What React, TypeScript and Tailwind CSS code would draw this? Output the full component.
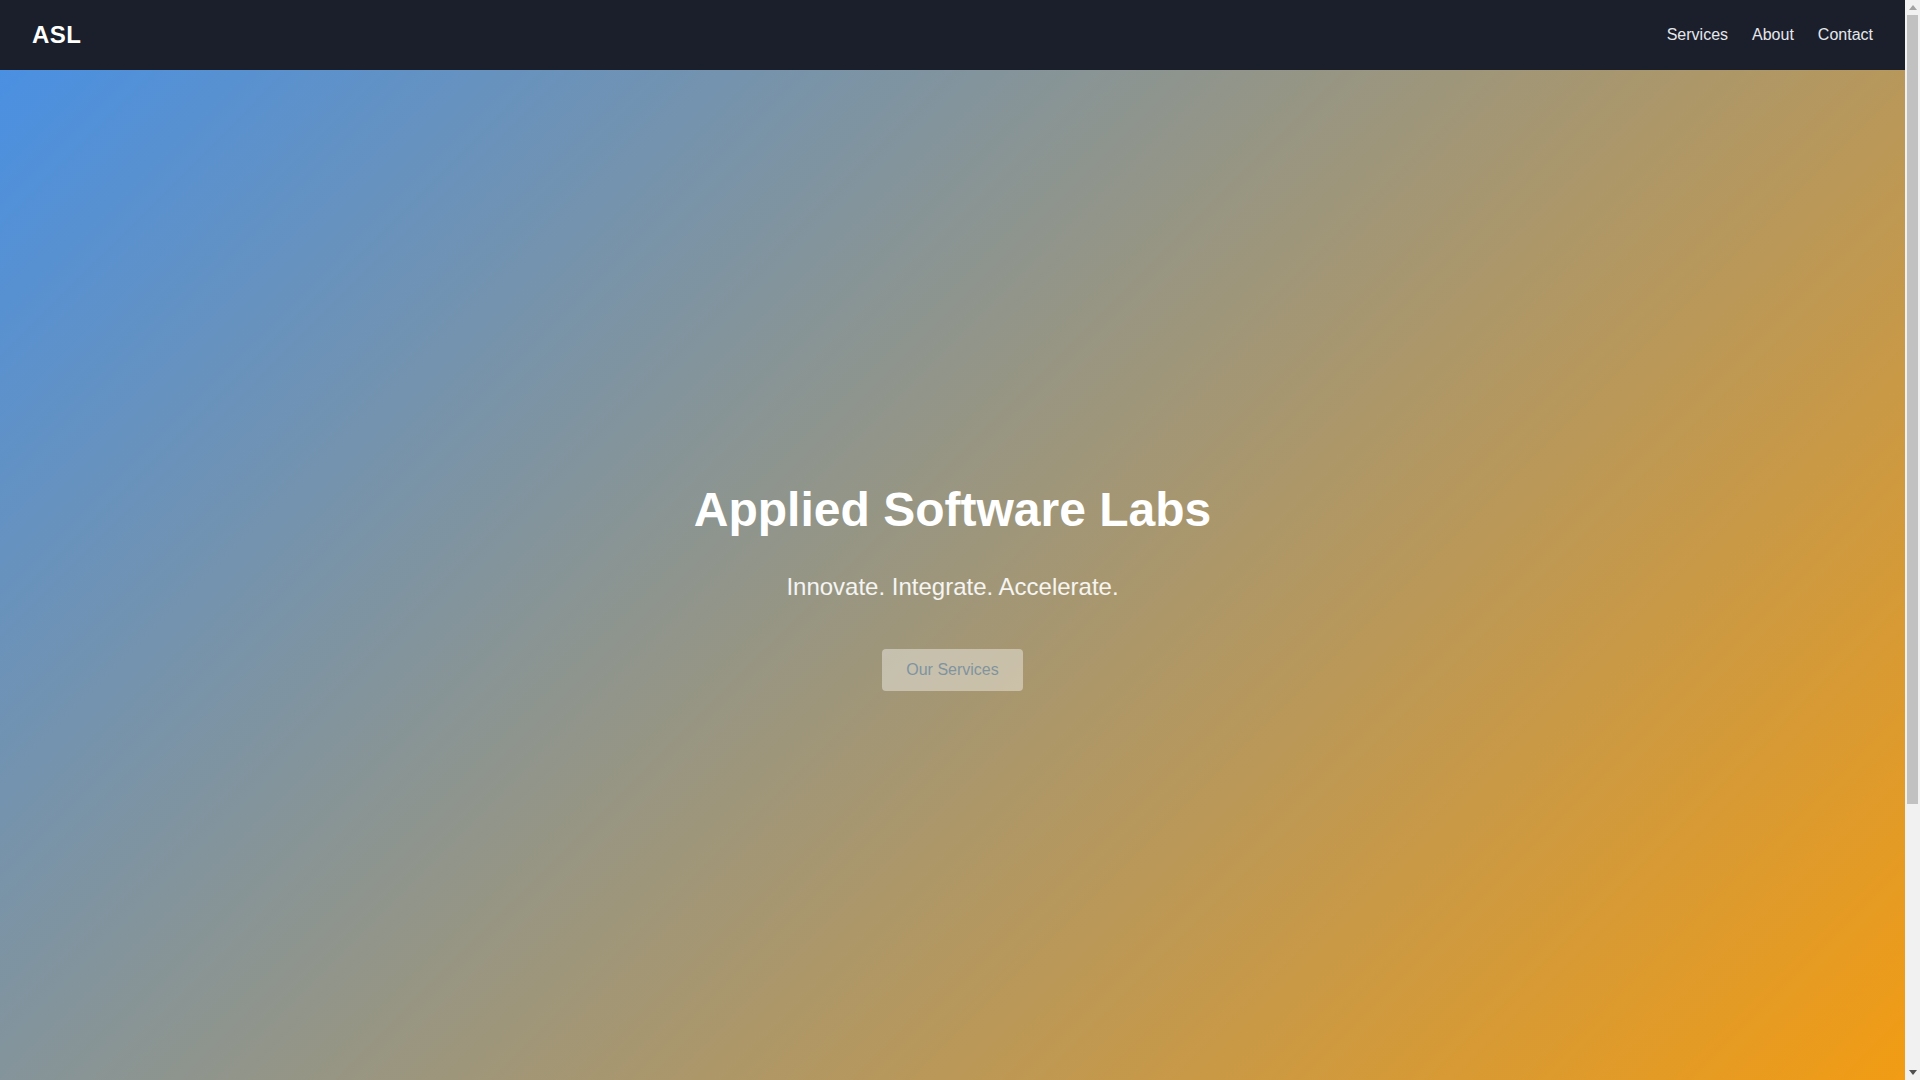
import React from "react";

function Scrollbar() {
  return (
    <div className="w-[15px] h-screen shrink-0 bg-[#f1f1f1] flex flex-col">
      <div className="h-[15px] flex items-center justify-center">
        <svg width="8" height="5" viewBox="0 0 8 5"><polygon points="4,0 8,5 0,5" fill="#a3a3a3" /></svg>
      </div>
      <div className="px-[2px] h-[789px]">
        <div className="h-full bg-[#c1c1c1]" />
      </div>
      <div className="flex-1" />
      <div className="h-[15px] flex items-center justify-center">
        <svg width="8" height="5" viewBox="0 0 8 5"><polygon points="0,0 8,0 4,5" fill="#505050" /></svg>
      </div>
    </div>
  );
}

export default function App() {
  return (
    <div className="h-screen flex overflow-hidden font-['Liberation_Sans',Arial,sans-serif]">
      <div className="flex-1 min-w-0 h-screen overflow-y-auto [scrollbar-width:none]">
        <nav className="h-[70px] bg-[#1b1f2b] flex items-center justify-between px-8">
          <div className="text-white text-[24px] font-bold tracking-[0.5px] leading-none">ASL</div>
          <ul className="flex items-center gap-6 text-[16px] text-[#e5e7eb]">
            <li><a href="#services">Services</a></li>
            <li><a href="#about">About</a></li>
            <li><a href="#contact">Contact</a></li>
          </ul>
        </nav>
        <section className="h-[1032px] bg-[linear-gradient(135deg,#4a90e2,#f39c12)] flex flex-col items-center justify-center text-center">
          <h1 className="text-white text-[48px] font-bold leading-[55px] mb-[36px]">Applied Software Labs</h1>
          <p className="text-white/90 text-[24px] leading-[28px] mb-[48px]">Innovate. Integrate. Accelerate.</p>
          <a
            href="#services"
            className="bg-white text-[#4a90e2] text-[16px] leading-[18px] px-6 py-3 rounded-[4px] opacity-40"
          >
            Our Services
          </a>
        </section>
        <section id="services" className="h-[335px] bg-white"></section>
      </div>
      <Scrollbar />
    </div>
  );
}
